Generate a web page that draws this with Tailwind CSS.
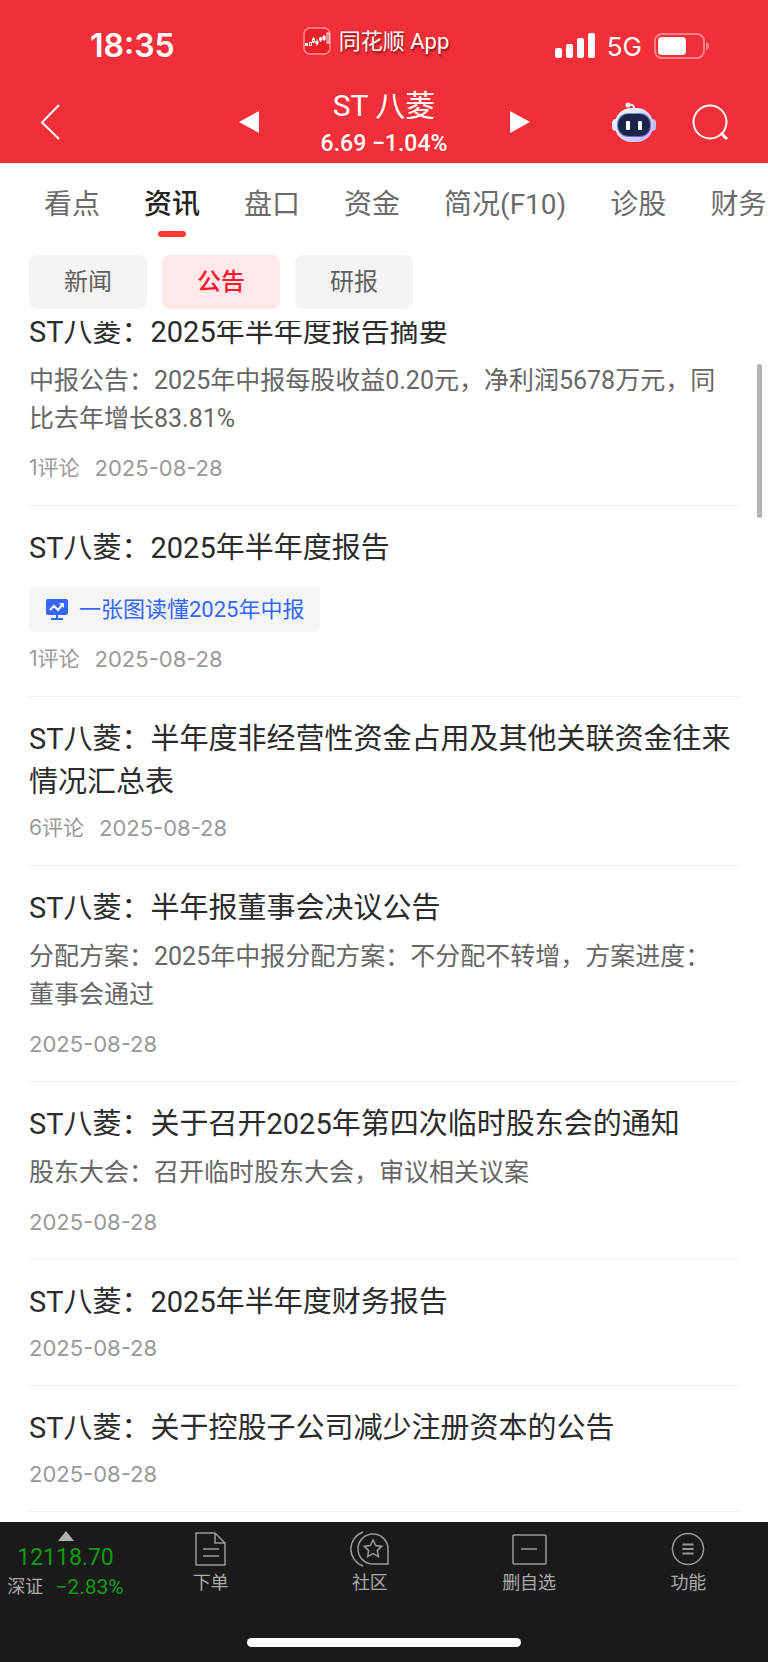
<!DOCTYPE html>
<html lang="zh-CN">
<head>
    <meta charset="UTF-8">
    <meta name="viewport" content="width=device-width, initial-scale=1.0">
    <title>ST八菱 - 公告</title>
    <script src="https://cdn.jsdelivr.net/npm/@tailwindcss/browser@4"></script>
</head>
<body class="h-screen flex flex-col overflow-hidden bg-white text-[#2b2b2b] font-[Roboto,'Noto_Sans_CJK_SC',sans-serif]">
    <header class="shrink-0 h-[163px] bg-[#f22f38] text-white">
        <!-- 状态栏 -->
        <div class="grid grid-cols-[1fr_auto_1fr] h-[84px] pt-3 pr-4">
            <div class="pl-[90px] h-[68px] flex items-center text-[32px] font-semibold font-[Inter,sans-serif]">18:35</div>
            <div class="flex items-center gap-2 h-[58px]">
                <svg class="w-7 h-7" viewBox="0 0 28 28">
                    <rect x="1" y="1" width="26" height="26" rx="6" fill="#e8202a" stroke="#ff8f90" stroke-width="1.5"/>
                    <rect x="2" y="16" width="3" height="3" fill="#fff"/>
                    <rect x="6.500" y="15.500" width="2" height="3" fill="none" stroke="#fff"/>
                    <path d="M10.500 10v6M14 12.500v6M17.500 10v5M21 8v6" stroke="#fff"/>
                    <rect x="9.500" y="12" width="2" height="3" fill="#e8202a" stroke="#fff"/>
                    <rect x="12.500" y="14" width="3" height="3" fill="#fff"/>
                    <rect x="16.500" y="11" width="2" height="2" fill="#e8202a" stroke="#fff"/>
                    <rect x="19.500" y="9" width="3" height="4" fill="#fff"/>
                    <rect x="24" y="6" width="2" height="10" fill="none" stroke="#fff"/>
                </svg>
                <span class="text-[22px] whitespace-nowrap [text-shadow:1px_2px_2px_rgba(60,0,0,0.6)]">同花顺 App</span>
            </div>
            <div class="pr-[42px] h-[68px] flex items-center justify-end gap-3">
                <svg class="w-10 h-[26px]" viewBox="0 0 40 26" fill="#fff">
                    <rect x="0" y="15" width="7" height="10" rx="2"/>
                    <rect x="11" y="11" width="7" height="14" rx="2"/>
                    <rect x="22" y="5" width="7" height="20" rx="2"/>
                    <rect x="33" y="0" width="7" height="25" rx="2"/>
                </svg>
                <span class="text-[26px] font-[Inter,sans-serif]">5G</span>
                <svg class="w-14 h-[26px]" viewBox="0 0 56 26">
                    <rect x="1" y="1" width="49" height="24" rx="7" fill="none" stroke="#f98287" stroke-width="2"/>
                    <rect x="4" y="4" width="28" height="18" rx="4" fill="#fff"/>
                    <path d="M52 9q3 1 3 4t-3 4z" fill="#f98287"/>
                </svg>
            </div>
        </div>
        <!-- 股票标题 -->
        <div class="grid grid-cols-[1fr_291px_1fr] items-center px-10">
            <a href="#" aria-label="返回">
                <svg class="w-5 h-9" viewBox="0 0 20 36" fill="none" stroke="#fff" stroke-width="2"><path d="M19 1L2 18.500L19 35"/></svg>
            </a>
            <div class="flex items-center justify-between">
                <button aria-label="上一只"><svg class="w-5 h-6" viewBox="0 0 20 24" fill="#fff"><path d="M20 1v22L0 12z"/></svg></button>
                <div class="text-center">
                    <h1 class="text-[30px] leading-[44px]">ST 八菱</h1>
                    <p class="text-[23px] leading-8 font-medium">6.69 −1.04%</p>
                </div>
                <button aria-label="下一只"><svg class="w-5 h-6" viewBox="0 0 20 24" fill="#fff"><path d="M0 1v22L20 12z"/></svg></button>
            </div>
            <div class="flex items-center justify-end gap-9">
                <button aria-label="智能助手">
                    <svg class="w-11 h-10" viewBox="0 0 44 40">
                        <defs>
                            <linearGradient id="shell" x1="0" y1="0" x2="1" y2="1"><stop offset="0" stop-color="#fff"/><stop offset="1" stop-color="#b9b4ec"/></linearGradient>
                            <linearGradient id="rim" x1="0" y1="0" x2="1" y2="1"><stop offset="0" stop-color="#56b6e8"/><stop offset="1" stop-color="#8a3fe8"/></linearGradient>
                        </defs>
                        <path d="M17 3q6-1 5 5" fill="none" stroke="#f1e4f3" stroke-width="2"/>
                        <circle cx="16" cy="3" r="2.500" fill="#f4f4ff"/>
                        <rect x="0" y="17" width="8" height="12" rx="4" fill="#e6e6fa"/>
                        <rect x="36" y="17" width="8" height="12" rx="4" fill="#c2bff0"/>
                        <rect x="3" y="6" width="38" height="34" rx="16" fill="url(#shell)"/>
                        <rect x="5" y="11" width="34" height="24" rx="11" fill="url(#rim)"/>
                        <rect x="6" y="12" width="32" height="22" rx="10" fill="#1c2447"/>
                        <rect x="14" y="19" width="4" height="9" rx="1" fill="#fff"/>
                        <rect x="26" y="19" width="4" height="9" rx="1" fill="#fff"/>
                    </svg>
                </button>
                <button aria-label="搜索">
                    <svg class="w-9 h-9" viewBox="0 0 36 36" fill="none" stroke="#fff" stroke-width="2"><circle cx="18" cy="18" r="16.500"/><path d="M29 29l6 6" stroke-width="3"/></svg>
                </button>
            </div>
        </div>
    </header>

    <!-- 一级导航 -->
    <nav class="shrink-0 flex gap-11 pl-11 h-[92px] overflow-hidden whitespace-nowrap text-[28px] leading-10 text-[#6b6b6b]">
        <a href="#" class="pt-[22px]">看点</a>
        <a href="#" class="pt-[22px] flex flex-col items-center text-[#222] font-medium">资讯<span class="w-7 h-[6px] mt-[6px] rounded-full bg-[#fb382f]"></span></a>
        <a href="#" class="pt-[22px]">盘口</a>
        <a href="#" class="pt-[22px]">资金</a>
        <a href="#" class="pt-[22px]">简况(F10)</a>
        <a href="#" class="pt-[22px]">诊股</a>
        <a href="#" class="pt-[22px]">财务</a>
    </nav>

    <!-- 二级分类 -->
    <div class="shrink-0 flex gap-[15px] pl-[29px] h-[66px] text-2xl text-[#5f5f5f]">
        <button class="w-[118px] h-[54px] rounded-lg bg-[#f4f4f4]">新闻</button>
        <button class="w-[118px] h-[54px] rounded-lg bg-[#ffe8ea] text-[#ff1732] font-medium">公告</button>
        <button class="w-[118px] h-[54px] rounded-lg bg-[#f4f4f4]">研报</button>
    </div>

    <!-- 公告列表 -->
    <main class="relative flex-1 min-h-0 overflow-hidden">
        <div class="-mt-[31px] px-[29px]">
            <article class="pt-[21px] pb-[25px] border-b border-[#f2f2f2]">
                <h2 class="text-[29px] leading-[43px]">ST八菱：2025年半年度报告摘要</h2>
                <p class="mt-2 pr-3 text-[25px] leading-[38px] text-[#666]">中报公告：2025年中报每股收益0.20元，净利润5678万元，同比去年增长83.81%</p>
                <p class="mt-[18px] flex gap-[15px] text-[21px] leading-6 text-[#999] font-[Inter,'Noto_Sans_CJK_SC',sans-serif]"><span>1评论</span><time class="text-[22px]">2025-08-28</time></p>
            </article>
            <article class="pt-[21px] pb-[25px] border-b border-[#f2f2f2]">
                <h2 class="text-[29px] leading-[43px]">ST八菱：2025年半年度报告</h2>
                <a href="#" class="mt-4 w-fit h-[46px] px-4 flex items-center gap-[10px] rounded bg-[#f5f5f5] text-[22px] text-[#3366ff]">
                    <svg class="w-6 h-6" viewBox="0 0 24 24">
                        <rect x="1" y="2" width="22" height="16" rx="2" fill="#3366ff"/>
                        <path d="M12 18v4M6 22h12" stroke="#3366ff" stroke-width="2"/>
                        <path d="M5 13l4-4 4 4 5-6" fill="none" stroke="#fff" stroke-width="2"/>
                        <path d="M14 6h5v5z" fill="#fff"/>
                    </svg>
                    一张图读懂2025年中报
                </a>
                <p class="mt-[15px] flex gap-[15px] text-[21px] leading-6 text-[#999] font-[Inter,'Noto_Sans_CJK_SC',sans-serif]"><span>1评论</span><time class="text-[22px]">2025-08-28</time></p>
            </article>
            <article class="pt-[21px] pb-[25px] border-b border-[#f2f2f2]">
                <h2 class="text-[29px] leading-[43px]">ST八菱：半年度非经营性资金占用及其他关联资金往来情况汇总表</h2>
                <p class="mt-3 flex gap-[15px] text-[21px] leading-6 text-[#999] font-[Inter,'Noto_Sans_CJK_SC',sans-serif]"><span>6评论</span><time class="text-[22px]">2025-08-28</time></p>
            </article>
            <article class="pt-[21px] pb-[25px] border-b border-[#f2f2f2]">
                <h2 class="text-[29px] leading-[43px]">ST八菱：半年报董事会决议公告</h2>
                <p class="mt-2 pr-3 text-[25px] leading-[38px] text-[#666]">分配方案：2025年中报分配方案：不分配不转增，方案进度：董事会通过</p>
                <p class="mt-[18px] text-[22px] leading-6 text-[#999] font-[Inter,sans-serif]"><time>2025-08-28</time></p>
            </article>
            <article class="pt-[21px] pb-[25px] border-b border-[#f2f2f2]">
                <h2 class="text-[29px] leading-[43px]">ST八菱：关于召开2025年第四次临时股东会的通知</h2>
                <p class="mt-2 pr-3 text-[25px] leading-[38px] text-[#666]">股东大会：召开临时股东大会，审议相关议案</p>
                <p class="mt-[18px] text-[22px] leading-6 text-[#999] font-[Inter,sans-serif]"><time>2025-08-28</time></p>
            </article>
            <article class="pt-[21px] pb-[25px] border-b border-[#f2f2f2]">
                <h2 class="text-[29px] leading-[43px]">ST八菱：2025年半年度财务报告</h2>
                <p class="mt-3 text-[22px] leading-6 text-[#999] font-[Inter,sans-serif]"><time>2025-08-28</time></p>
            </article>
            <article class="pt-[21px] pb-[25px] border-b border-[#f2f2f2]">
                <h2 class="text-[29px] leading-[43px]">ST八菱：关于控股子公司减少注册资本的公告</h2>
                <p class="mt-3 text-[22px] leading-6 text-[#999] font-[Inter,sans-serif]"><time>2025-08-28</time></p>
            </article>
        </div>
        <!-- 滚动条 -->
        <div class="absolute right-[6px] top-[43px] w-[5px] h-[154px] rounded-full bg-[#b3b3b3]"></div>
    </main>

    <!-- 底部工具栏 -->
    <footer class="shrink-0 h-[140px] flex flex-col justify-between bg-[#1a1a1a] text-[#aaa]">
        <div class="flex text-lg leading-6">
            <a href="#" class="w-[131px] pt-[9px] flex flex-col items-center">
                <svg class="w-4 h-[10px]" viewBox="0 0 16 10" fill="#b0b0b0"><path d="M8 0l8 10H0z"/></svg>
                <span class="text-[23px] leading-[34px] text-[#0a9d0a]">12118.70</span>
                <span class="flex items-center gap-3 leading-6 whitespace-nowrap">深证<b class="text-[21px] text-[#0a9d0a] font-normal">−2.83%</b></span>
            </a>
            <a href="#" class="flex-1 pt-[9px] flex flex-col items-center gap-1">
                <svg class="w-9 h-9" viewBox="0 0 36 36" fill="none" stroke="#999" stroke-width="1.500"><path d="M3 2h19l10 10v22H3zM22 2v10h10M10 18h16M10 25h16"/></svg>
                下单
            </a>
            <a href="#" class="flex-1 pt-[9px] flex flex-col items-center gap-1">
                <svg class="w-10 h-9" viewBox="0 0 40 36" fill="none" stroke="#999" stroke-width="1.500">
                    <path d="M23 33a15 15 0 1 1 15-15v15z"/>
                    <path d="M13 1a18 18 0 0 0 0 34"/>
                    <path d="M23 9l2.700 5.600 6 .8-4.400 4.200 1.100 6-5.400-2.900-5.400 2.900 1.100-6-4.400-4.200 6-.8z"/>
                </svg>
                社区
            </a>
            <a href="#" class="flex-1 pt-[9px] flex flex-col items-center gap-1">
                <svg class="w-9 h-9" viewBox="0 0 36 36" fill="none" stroke="#999" stroke-width="1.500"><rect x="2" y="4" width="33" height="29" rx="1"/><path d="M10 18h16"/></svg>
                删自选
            </a>
            <a href="#" class="flex-1 pt-[9px] flex flex-col items-center gap-1">
                <svg class="w-9 h-9" viewBox="0 0 36 36" fill="none" stroke="#999" stroke-width="1.500"><circle cx="18" cy="18" r="15.500"/><path d="M12.500 13.500h11M12.500 18h11M12.500 22.500h11" stroke-width="2"/></svg>
                功能
            </a>
        </div>
        <div class="w-[274px] h-[9px] mx-auto mb-[15px] rounded-full bg-white"></div>
    </footer>
</body>
</html>
